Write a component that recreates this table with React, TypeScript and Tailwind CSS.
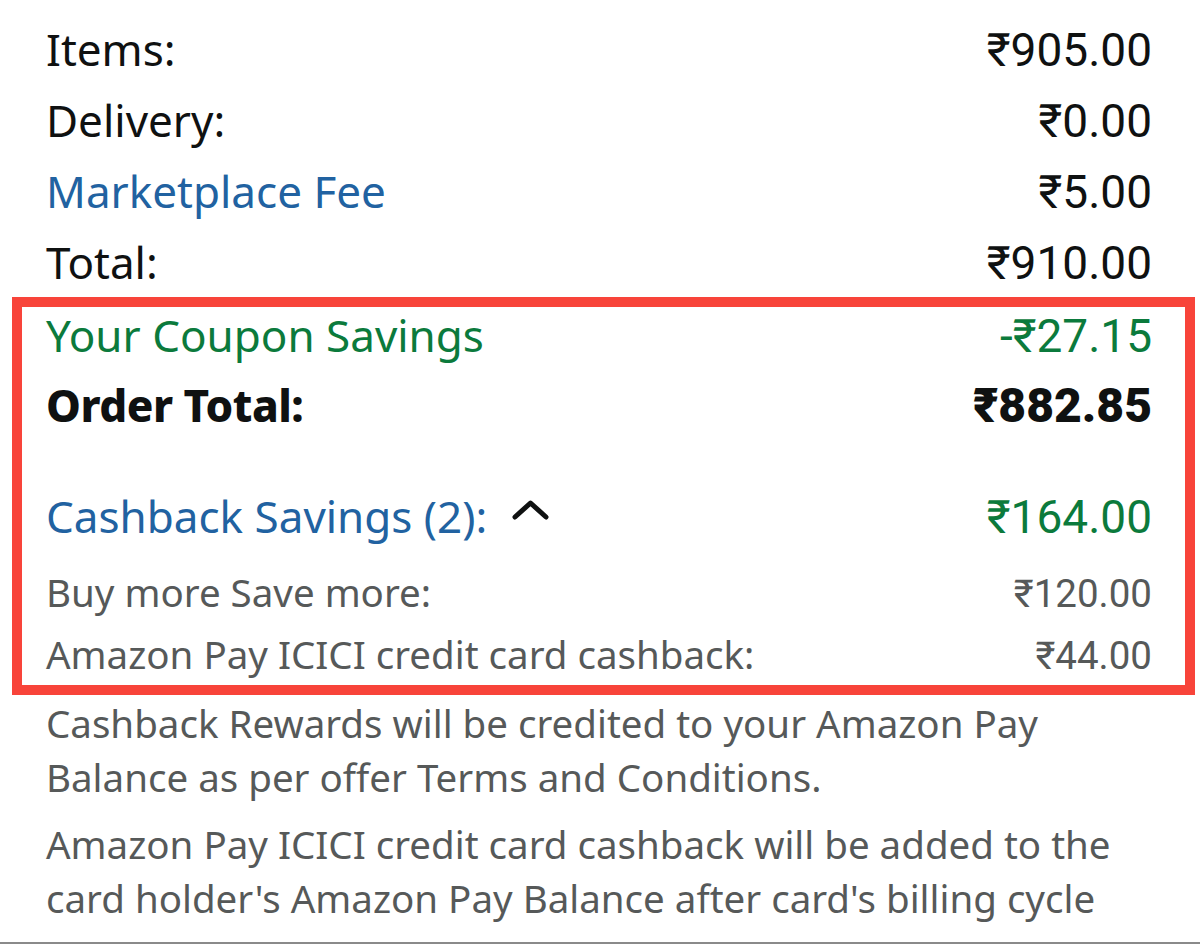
import { ReactNode } from 'react';

const label = "font-['Noto_Sans',sans-serif]";
const num = "font-['Roboto','Noto_Sans',sans-serif] leading-none";

function Row({ left, right, className }: { left: ReactNode; right: ReactNode; className: string }) {
  return (
    <div className={`flex items-baseline justify-between ${className}`}>
      <span className={label}>{left}</span>
      <span className={num}>{right}</span>
    </div>
  );
}

export default function App() {
  return (
    <div className="flex h-[944px] flex-col bg-white text-[#0f1111]">
      <div className="pl-[46px] pr-[48px] pt-[14px]">
        <Row left="Items:" right={<span className="text-[46px]">₹905.00</span>} className="text-[44px] leading-[71px]" />
        <Row left="Delivery:" right={<span className="text-[46px]">₹0.00</span>} className="text-[44px] leading-[71px]" />
        <Row
          left={<span className="text-[#2162a1]">Marketplace Fee</span>}
          right={<span className="text-[46px]">₹5.00</span>}
          className="text-[44px] leading-[71px]"
        />
        <Row left="Total:" right={<span className="text-[46px]">₹910.00</span>} className="text-[44px] leading-[71px]" />

        <div className="-mt-px ml-[-34px] mr-[-43px] border-[10px] border-[#f8443a] pl-[24px] pr-[33px]">
          <Row
            left="Your Coupon Savings"
            right={<span className="text-[46px]">-₹27.15</span>}
            className="text-[44px] leading-[56px] text-[#0b7a3c]"
          />
          <Row
            left={<span className="font-extrabold tracking-[-0.5px]">Order Total:</span>}
            right={<span className="text-[48px] font-black">₹882.85</span>}
            className="mt-[7px] text-[44px] leading-[71px]"
          />
          <div className="mt-[40px] flex items-baseline justify-between text-[44px] leading-[71px]">
            <span className={`${label} text-[#2162a1]`}>
              Cashback Savings (2):
              <svg
                width="37"
                height="20"
                viewBox="0 0 37 20"
                className="ml-[25px] inline-block align-[13px]"
              >
                <polyline
                  points="3,17 18.5,3 34,17"
                  fill="none"
                  stroke="#0f1111"
                  strokeWidth="5"
                  strokeLinecap="round"
                  strokeLinejoin="round"
                />
              </svg>
            </span>
            <span className={`${num} text-[46px] text-[#0b7a3c]`}>₹164.00</span>
          </div>
          <Row
            left="Buy more Save more:"
            right="₹120.00"
            className="mt-[8px] text-[38.5px] leading-[64px] text-[#565959]"
          />
          <Row
            left="Amazon Pay ICICI credit card cashback:"
            right="₹44.00"
            className="text-[38.5px] leading-[61px] text-[#565959]"
          />
        </div>

        <div className={`${label} pt-[1px] text-[38.5px] leading-[54px] text-[#565959]`}>
          <p>
            Cashback Rewards will be credited to your Amazon Pay
            <br />
            Balance as per offer Terms and Conditions.
          </p>
          <p className="mt-[13px]">
            Amazon Pay ICICI credit card cashback will be added to the
            <br />
            card holder's Amazon Pay Balance after card's billing cycle
          </p>
        </div>
      </div>
      <div className="mt-auto h-[2px] bg-[#8a8a8a]" />
    </div>
  );
}
